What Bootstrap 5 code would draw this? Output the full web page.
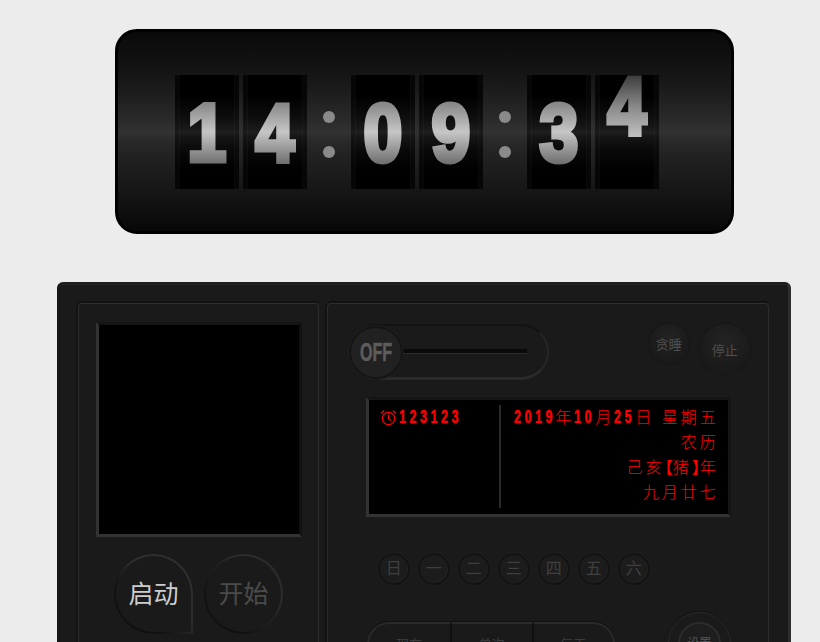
<!doctype html>
<html lang="zh">
<head>
<meta charset="utf-8">
<title>Clock</title>
<link href="https://cdn.jsdelivr.net/npm/bootstrap@5.3.0/dist/css/bootstrap.min.css" rel="stylesheet">
<style>
html,body{height:642px;overflow:hidden}
body{background:#ececec;font-family:"Liberation Sans","Noto Sans CJK SC",sans-serif}
.clock-shell{width:619px;height:205px;margin:29px 0 0 115px;border:3px solid #000;border-radius:22px;
 background:linear-gradient(#0a0a0a 0,#131313 18%,#1c1c1c 30%,#282828 42%,#323232 51%,#2a2a2a 54%,#222 62%,#171717 78%,#0f0f0f 90%,#070707 100%);
 box-sizing:border-box;padding-top:43px;padding-left:57px}
.digit-cell{width:64px;height:114px;overflow:hidden;
 background:linear-gradient(#000 0,#000 18%,#0e0e0e 38%,#1b1b1b 49%,#202020 50%,#151515 54%,#090909 66%,#000 85%,#000 100%);
 box-shadow:inset 4px 0 0 rgba(0,0,0,.25),inset 5px 0 0 rgba(255,255,255,.03),inset -4px 0 0 rgba(0,0,0,.25),inset -5px 0 0 rgba(255,255,255,.03)}
.digit-cell svg{display:block}
.flip-text{font-family:"Liberation Sans",sans-serif;font-weight:700;font-size:82px;text-anchor:middle;stroke-width:5px;stroke-linejoin:miter;transform:translateX(32px) scaleX(.85)}
.digit-gap{gap:4px}
.colon-col{width:44px;height:114px;gap:23px;padding-top:5px}
.colon-dot{width:12px;height:12px;border-radius:50%;background:#8a8a8a}
.panel-shell{width:734px;height:500px;margin:48px 0 0 57px;background:#1a1a1a;border-radius:6px;
 border-top:2px solid #1e1e1e;border-left:3px solid #151515;border-right:3px solid #2e2e2e;padding:19px 19px 0 18px;gap:8px;box-shadow:inset 0 1px 0 #262626}
.sub-panel{border-radius:4px;height:470px;border:1px solid #2c2c2c;border-top-color:#2f2f2f;box-shadow:0 -2px 0 #121212,-2px 0 0 #121212}
.left-panel{width:241px;padding:18px 0 0 17px}
.right-panel{width:443px;padding:20px 0 0 21px}
.video-box{width:206px;height:215px;background:#000;border:3px solid #111;border-left-color:#333;border-bottom-color:#333;border-top-color:#151515;border-right-color:#111}
.big-row{gap:11px;margin:17px 0 0 18px}
.big-btn{width:79px;height:80px;border-radius:50%;border:2px solid transparent;
 background:linear-gradient(#1a1a1a,#1a1a1a) padding-box,linear-gradient(to top right,#111 25%,#2c2c2c 70%) border-box;
 font-size:25px;line-height:1;color:#4a4a4a;padding:1px 0 0}
.big-btn.on{color:#ccc;border-bottom-right-radius:0;background:linear-gradient(#1a1a1a,#1a1a1a) padding-box,linear-gradient(to top right,#111 30%,#2e2e2e 58%) border-box}
.toggle-row{width:401px}
.toggle-track{width:200px;height:56px;border-radius:28px;border:2px solid #131313;border-bottom:3px solid #2b2b2b;border-right-color:#262626;position:relative;padding-left:52px}
.toggle-knob{position:absolute;left:-2px;top:0;width:54px;height:53px;border-radius:50%;background:#212121;border:2px solid #151515;box-shadow:0 0 0 1px #1f1f1f;
 font-family:"Liberation Sans",sans-serif;font-weight:700;font-size:26px;color:#5c5c5c}
.off-word{display:inline-block;transform:scaleX(.62);-webkit-text-stroke:.6px #5c5c5c}
.toggle-line{width:124px;height:5px;background:#0a0a0a;border-bottom:1px solid #2c2c2c}
.round-btn{border-radius:50%;background:radial-gradient(circle at 50% 35%,#232323,#191919 75%);box-shadow:0 0 2px #111;color:#4e4e4e;padding:0;border:0;line-height:1}
.snooze{width:40px;height:40px;font-size:13px}
.stop-btn{width:50px;height:50px;font-size:13px;padding-top:2px}
.btn-pair{gap:11px;margin-left:100px}
.led-box{width:365px;height:120px;margin:17px 0 0 17px;background:#000;border:3px solid #1c1c1c;border-left-color:#333;border-bottom-color:#333;border-top-color:#151515;border-right-color:#141414;padding:5px 0 6px 0;color:#f00}
.led-left{width:132px;border-right:2px solid #2a2a2a;padding:0 0 0 11px;line-height:25px}
.led-right{width:227px;text-align:right;padding:0 9px 0 0;font-size:16px;font-weight:300;line-height:25px;letter-spacing:3px;white-space:nowrap}
.led-num{display:inline-block;text-align:left;font-weight:700;font-size:18px;letter-spacing:5px;transform:scaleX(.7);transform-origin:left center;-webkit-text-stroke:.4px #f00;white-space:nowrap;vertical-align:top}
.wd-2{width:21px}
.wd-4{width:41px}
.wd-6{width:63px}
.alarm-row{gap:2px}
.br-l,.br-r{display:inline-block;width:8px;overflow:hidden;letter-spacing:0;font-weight:700;vertical-align:top;text-align:left}
.br-l{text-indent:-8px}
.day-row{gap:8px;margin:36px 0 0 29px}
.day-btn{width:32px;height:32px;border-radius:50%;background:#1c1c1c;border:2px solid #131313;box-shadow:0 0 0 1px #1e1e1e,inset -1px -1px 1px #232323;color:#3f3f3f;font-size:16px;line-height:1;padding:0}
.seg-row{margin:37px 0 0 18px;width:248px}
.seg-btn{width:82px;height:50px;background:#1a1a1a;border:0;border-top:2px solid #2a2a2a;border-right:2px solid #0f0f0f;color:#3d3d3d;font-size:13px;line-height:1;padding:0 0 7px;box-shadow:0 -1px 0 #111}
.seg-btn:first-child{width:85px;border-top-left-radius:22px;border-left:2px solid #2a2a2a}
.seg-btn:last-child{width:81px;border-top-right-radius:22px;border-right:2px solid #2a2a2a}
.setup-ring{position:absolute;left:340px;top:308px;width:63px;height:63px;border-radius:50%;border:1px solid #2a2a2a;box-shadow:0 -1px 0 #111;padding:9px}
.setup-btn{width:43px;height:43px;border-radius:50%;border:2px solid #2c2c2c;background:#1e1e1e;color:#555;font-size:12px;line-height:1;padding:0}
</style>
</head>
<body>
<svg width="0" height="0" class="position-absolute">
 <defs>
  <linearGradient id="dg" gradientUnits="userSpaceOnUse" x1="0" y1="25" x2="0" y2="89">
   <stop offset="0" stop-color="#808080"/><stop offset=".5" stop-color="#c6c6c6"/><stop offset="1" stop-color="#6e6e6e"/>
  </linearGradient>
  <linearGradient id="dg2" gradientUnits="userSpaceOnUse" x1="0" y1="0" x2="0" y2="60">
   <stop offset="0" stop-color="#3c3c3c"/><stop offset=".55" stop-color="#8c8c8c"/><stop offset="1" stop-color="#bdbdbd"/>
  </linearGradient>
 </defs>
</svg>

<div class="clock-shell d-flex align-items-start">
 <div class="d-flex digit-gap">
  <div class="digit-cell"><svg width="64" height="114"><text class="flip-text" x="0" y="86.5" fill="url(#dg)" stroke="url(#dg)">1</text></svg></div>
  <div class="digit-cell"><svg width="64" height="114"><text class="flip-text" x="0" y="86.5" fill="url(#dg)" stroke="url(#dg)">4</text></svg></div>
 </div>
 <div class="colon-col d-flex flex-column align-items-center justify-content-center"><span class="colon-dot"></span><span class="colon-dot"></span></div>
 <div class="d-flex digit-gap">
  <div class="digit-cell"><svg width="64" height="114"><text class="flip-text" x="0" y="86.5" fill="url(#dg)" stroke="url(#dg)">0</text></svg></div>
  <div class="digit-cell"><svg width="64" height="114"><text class="flip-text" x="0" y="86.5" fill="url(#dg)" stroke="url(#dg)">9</text></svg></div>
 </div>
 <div class="colon-col d-flex flex-column align-items-center justify-content-center"><span class="colon-dot"></span><span class="colon-dot"></span></div>
 <div class="d-flex digit-gap">
  <div class="digit-cell"><svg width="64" height="114"><text class="flip-text" x="0" y="86.5" fill="url(#dg)" stroke="url(#dg)">3</text></svg></div>
  <div class="digit-cell"><svg width="64" height="114"><text class="flip-text" x="0" y="58.5" fill="url(#dg2)" stroke="url(#dg2)">4</text></svg></div>
 </div>
</div>

<div class="panel-shell d-flex position-relative">
 <div class="sub-panel left-panel">
  <div class="video-box"></div>
  <div class="big-row d-flex">
   <button class="big-btn on" type="button">启动</button>
   <button class="big-btn" type="button">开始</button>
  </div>
 </div>
 <div class="sub-panel right-panel position-relative">
  <div class="toggle-row d-flex align-items-start">
   <div class="toggle-track d-flex align-items-center">
    <div class="toggle-knob d-flex align-items-center justify-content-center"><span class="off-word">OFF</span></div>
    <div class="toggle-line"></div>
   </div>
   <div class="btn-pair d-flex align-items-start">
    <button class="round-btn snooze" type="button">贪睡</button>
    <button class="round-btn stop-btn" type="button">停止</button>
   </div>
  </div>
  <div class="led-box d-flex">
   <div class="led-left">
    <div class="alarm-row d-flex align-items-center">
     <svg width="17" height="17" viewBox="0 0 17 17" fill="none" stroke="#f00" stroke-width="1.2"><circle cx="8.5" cy="9.5" r="6.2"/><path d="M8.5 5.5v4.2l2.8 1.8M1 4.5 4.2 1.5M16 4.5 12.8 1.5"/></svg>
     <span class="led-num wd-6">123123</span>
    </div>
   </div>
   <div class="led-right">
    <div><span class="led-num wd-4">2019</span>年<span class="led-num wd-2">10</span>月<span class="led-num wd-2">25</span>日 星期五</div>
    <div>农历</div>
    <div>己亥<span class="br-l">【</span>猪<span class="br-r">】</span>年</div>
    <div>九月廿七</div>
   </div>
  </div>
  <div class="day-row d-flex">
   <button class="day-btn" type="button">日</button>
   <button class="day-btn" type="button">一</button>
   <button class="day-btn" type="button">二</button>
   <button class="day-btn" type="button">三</button>
   <button class="day-btn" type="button">四</button>
   <button class="day-btn" type="button">五</button>
   <button class="day-btn" type="button">六</button>
  </div>
  <div class="seg-row d-flex">
   <button class="seg-btn" type="button">现在</button>
   <button class="seg-btn" type="button">单次</button>
   <button class="seg-btn" type="button">每天</button>
  </div>
  <div class="setup-ring"><button class="setup-btn" type="button">设置</button></div>
 </div>
</div>
</body>
</html>
